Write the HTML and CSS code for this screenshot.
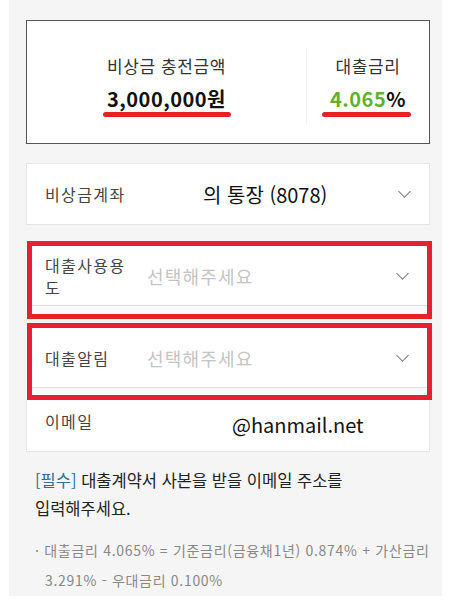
FILE: index.html
```html
<!DOCTYPE html>
<html lang="ko">
<head>
<meta charset="UTF-8">
<meta name="viewport" content="width=device-width, initial-scale=1.0">
<title>비상금 대출</title>
<link rel="stylesheet" href="styles.css">
</head>
<body>

<div class="panel">
    <div class="summary">
        <div class="sum-col sum-left">
            <div class="sum-label">비상금 충전금액</div>
            <div class="sum-value">3,000,000원</div>
            <div class="mark mark-left"></div>
        </div>
        <div class="sum-col sum-right">
            <div class="sum-label">대출금리</div>
            <div class="sum-value"><span class="green">4.065</span>%</div>
            <div class="mark mark-right"></div>
        </div>
    </div>

    <div class="row-card account">
        <div class="row-label">비상금계좌</div>
        <div class="row-value big">의 통장 (8078)</div>
        <span class="chevron"></span>
    </div>

    <div class="red-box first">
        <div class="row-card inner">
            <div class="row-label narrow">대출사용용도</div>
            <div class="row-value placeholder">선택해주세요</div>
            <span class="chevron"></span>
        </div>
    </div>

    <div class="red-box">
        <div class="row-card inner">
            <div class="row-label narrow">대출알림</div>
            <div class="row-value placeholder">선택해주세요</div>
            <span class="chevron"></span>
        </div>
    </div>

    <div class="row-card email">
        <div class="row-label">이메일</div>
        <div class="row-value big mail">@hanmail.net</div>
    </div>

    <p class="note"><span class="must">[필수]</span> 대출계약서 사본을 받을 이메일 주소를 입력해주세요.</p>

    <p class="bullet">· 대출금리 4.065% = 기준금리(금융채1년) 0.874% + 가산금리 3.291% - 우대금리 0.100%</p>
</div>

</body>
</html>
```

FILE: styles.css
```css
body {
    font-family: "Noto Sans CJK KR", "Noto Sans", sans-serif;
    background-color: #fff;
    color: #222;
    margin: 0;
    padding: 0;
}

.panel {
    margin-left: 9px;
    width: 433px;
    background-color: #f5f5f5;
    padding: 20px 0 1px 17px;
    box-sizing: border-box;
}

.summary {
    display: flex;
    width: 404px;
    height: 124px;
    box-sizing: border-box;
    background-color: #fff;
    border: 1px solid #555;
}

.sum-col {
    display: flex;
    flex-direction: column;
    align-items: center;
    padding-top: 33px;
}

.sum-left {
    width: 279px;
}

.sum-right {
    flex: 1;
    margin: 28px 0 18px;
    padding-top: 5px;
    border-left: 1px solid #f2f2f2;
}

.sum-label {
    font-size: 17px;
    line-height: 24px;
    letter-spacing: 0.6px;
    color: #333;
}

.sum-value {
    margin-top: 8px;
    font-size: 20px;
    line-height: 26px;
    font-weight: bold;
    letter-spacing: 0.5px;
    color: #111;
}

.green {
    color: #5db42c;
}

.mark {
    height: 5px;
    border-radius: 3px;
    background-color: #e5222b;
}

.mark-left {
    width: 128px;
}

.mark-right {
    width: 89px;
    margin-left: -4px;
}

.row-card {
    display: flex;
    align-items: center;
    width: 404px;
    box-sizing: border-box;
    background-color: #fff;
    border: 1px solid #e6e6e6;
    padding: 0 18px;
    position: relative;
}

.account {
    margin-top: 19px;
    height: 62px;
}

.row-label {
    width: 102px;
    font-size: 16px;
    line-height: 22px;
    letter-spacing: 1.4px;
    color: #444;
}

.narrow {
    width: 84px;
    margin-right: 18px;
}

.row-value {
    font-size: 15px;
}

.big {
    font-size: 20px;
    color: #111;
}

.account .big {
    margin-left: 56px;
}

.placeholder {
    font-size: 18px;
    letter-spacing: 1.2px;
    color: #c4c4c4;
}

.chevron {
    position: absolute;
    right: 20px;
    top: 50%;
    width: 8px;
    height: 8px;
    margin-top: -7px;
    border-right: 1px solid #777;
    border-bottom: 1px solid #777;
    transform: rotate(45deg);
}

.red-box {
    width: 405px;
    margin-left: 1px;
    margin-top: 4px;
    height: 77px;
    box-sizing: border-box;
    border: 5px solid #e5222b;
    background-color: #fafafa;
}

.red-box.first {
    margin-top: 16px;
    height: 78px;
}

.inner {
    width: 100%;
    height: 60px;
    border: none;
    border-bottom: 1px solid #e2e2e2;
    padding-left: 13px;
}

.email {
    height: 52px;
    border-top: none;
    align-items: flex-start;
    padding-top: 10px;
}

.mail {
    margin-left: 85px;
}

.note {
    margin: 14px 0 0 9px;
    width: 310px;
    font-size: 16.5px;
    line-height: 28px;
    color: #222;
}

.must {
    color: #2c6d9b;
}

.bullet {
    margin: 13px 0 0 9px;
    padding-left: 10px;
    text-indent: -10px;
    width: 392px;
    font-size: 14px;
    line-height: 30px;
    color: #888;
    letter-spacing: 0.7px;
}
```
